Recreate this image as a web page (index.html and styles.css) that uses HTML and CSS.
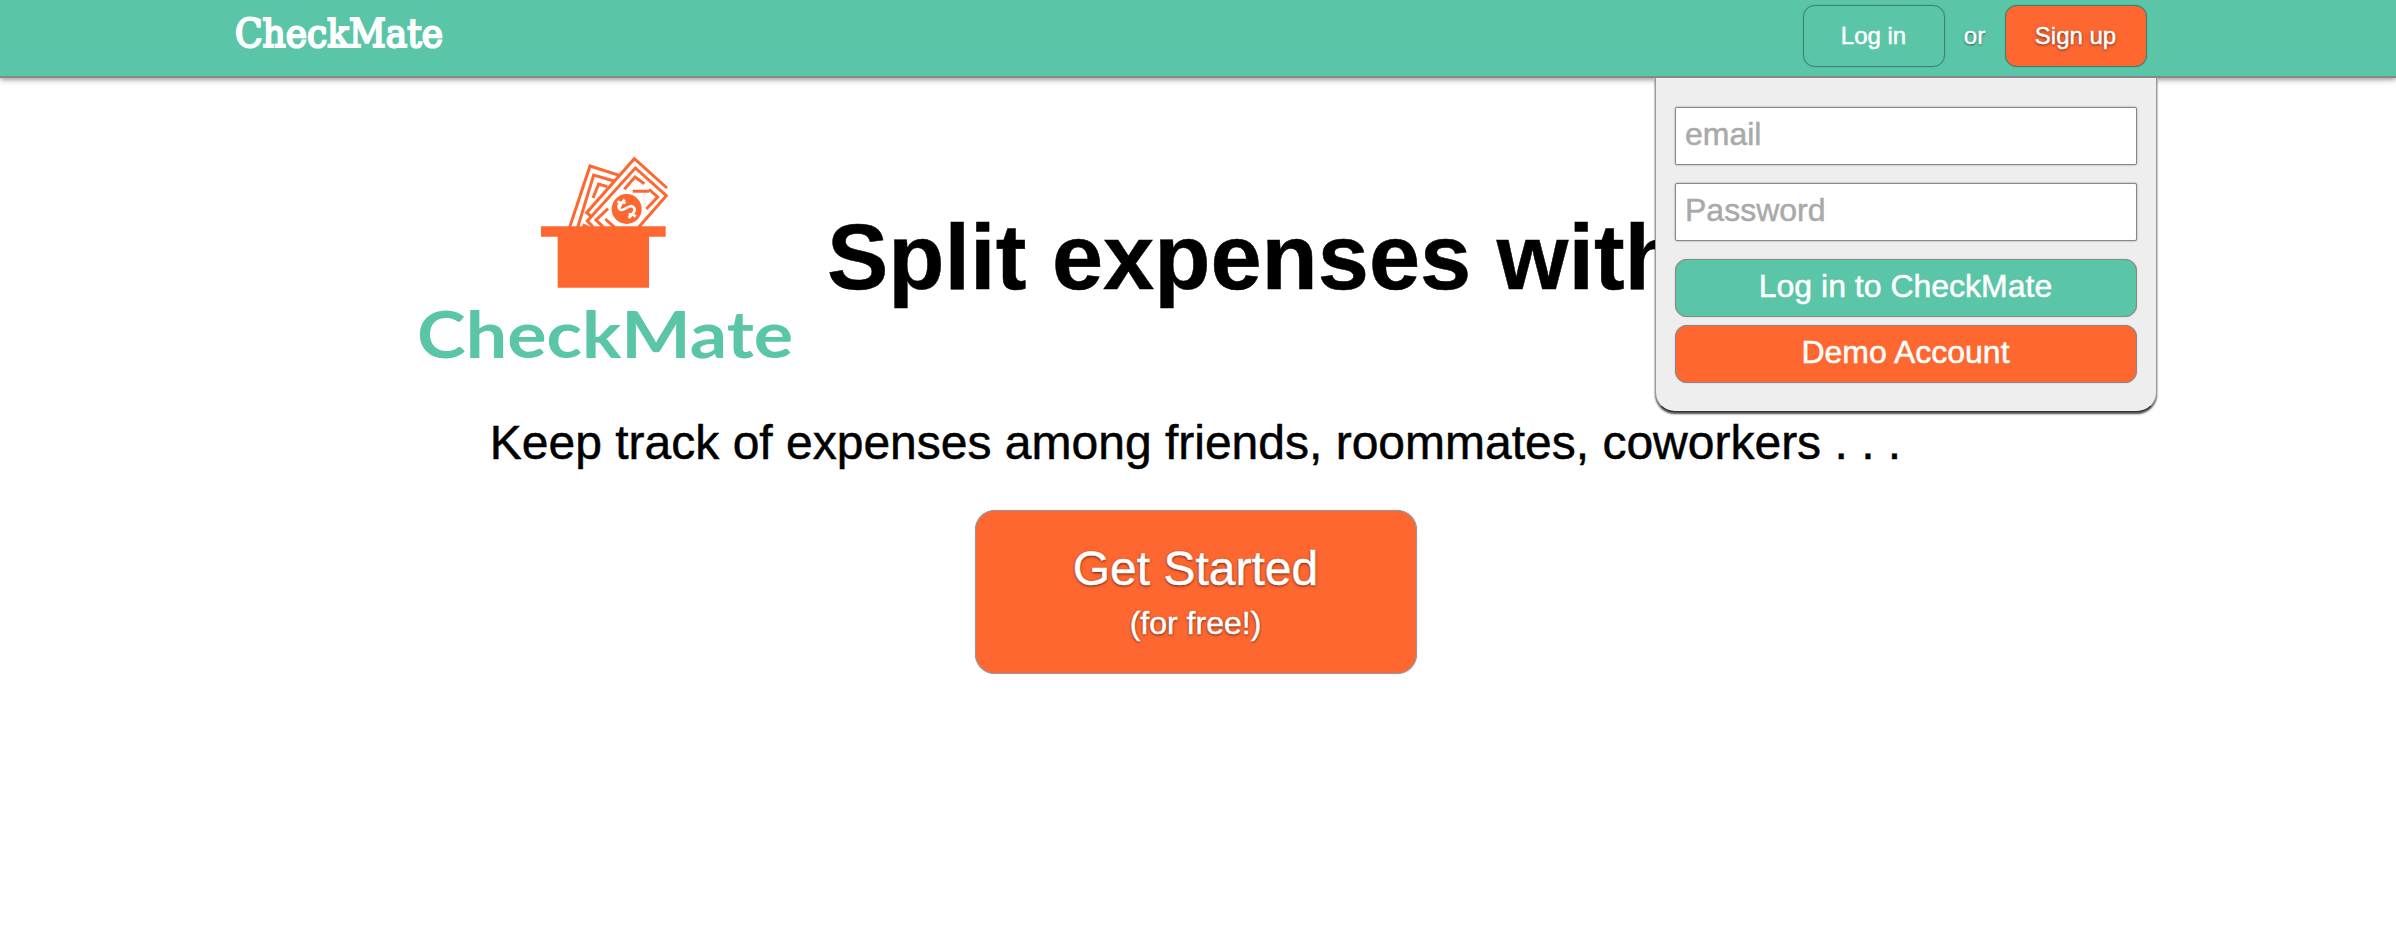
FILE: index.html
```html
<!DOCTYPE html>
<html lang="en">
<head>
<meta charset="utf-8">
<title>CheckMate</title>
<link rel="stylesheet" href="styles.css">
</head>
<body>
<header class="header">
  <a class="brand" aria-label="CheckMate">
    <svg width="212" height="76" viewBox="0 0 212 76"><text class="brand-text" x="1" y="47" textLength="208" lengthAdjust="spacingAndGlyphs">CheckMate</text></svg>
  </a>
  <nav class="nav">
    <a class="nav-button login">Log in</a>
    <span class="nav-or">or</span>
    <a class="nav-button signup">Sign up</a>
    <form class="login-panel">
      <input class="field" type="text" placeholder="email">
      <input class="field" type="password" placeholder="Password">
      <button class="panel-button green" type="button">Log in to CheckMate</button>
      <button class="panel-button orange" type="button">Demo Account</button>
    </form>
  </nav>
</header>
<main class="main">
  <section class="hero">
    <svg class="logo" width="380" height="240" viewBox="0 0 380 240">
      <g transform="translate(104 0) scale(.33333)">
        <g fill="none" stroke="#ff6730" stroke-width="9">
          <path d="M149 262L210 78L300 107"/>
          <path d="M173 262L221 105L282 123"/>
          <path d="M219 174L236 132L262 140"/>
          <path d="M441 144L343 56L200 218L212 228"/>
          <path d="M356 262L439 167L346 84L202 243L220 262"/>
          <path d="M313 148L345 111L373 131"/>
          <path d="M338 154H387M387 148L413 171L379 207"/>
          <path d="M264 206L228 240L251 262M256 237L284 262"/>
          <path d="M188 255L206 262"/>
        </g>
        <circle cx="320" cy="207" r="45" fill="#ff6730"/>
        <path d="M317 189C305 183 292 193 297 205C304 219 320 200 334 198C350 202 346 224 326 223M292 184L304 190L298 203M304 190L314 179M347 230L338 222L345 209M338 222L326 234" fill="none" stroke="#fff" stroke-width="8"/>
        <path d="M63 259H437V290H387V443H113V290H63Z" fill="#ff6730"/>
      </g>
      <text class="logo-text" x="1" y="218" textLength="376" lengthAdjust="spacingAndGlyphs">CheckMate</text>
    </svg>
    <h1 class="title">Split expenses with friends</h1>
  </section>
  <p class="subtitle">Keep track of expenses among friends, roommates, coworkers . . .</p>
  <a class="cta"><span class="cta-main">Get Started</span><span class="cta-sub">(for free!)</span></a>
</main>
</body>
</html>
```
FILE: styles.css
```css
* { box-sizing: border-box; }
body {
  margin: 0;
  background: #fff;
  color: #000;
  font-family: "Liberation Sans", Arial, sans-serif;
  -webkit-text-stroke: .5px;
}
.header {
  position: relative;
  z-index: 1;
  display: flex;
  justify-content: space-between;
  height: 78px;
  padding: 0 249px 0 234px;
  background: #5ac5a7;
  border-bottom: 2px solid #888;
  box-shadow: 0 1px 6px rgba(0, 0, 0, .5);
}
.brand { height: 76px; }
.brand svg { display: block; overflow: visible; }
.brand-text {
  fill: #fff;
  stroke: #fff;
  -webkit-text-stroke: 0;
  stroke-width: 2.2px;
  font: 39px "DejaVu Serif", serif;
}
.nav {
  position: relative;
  display: flex;
  align-items: center;
  height: 62px;
  margin-top: 5px;
  color: #fff;
  font-size: 24px;
}
.nav-button {
  width: 142px;
  height: 62px;
  border: 1px solid #3a8370;
  border-radius: 12px;
  line-height: 60px;
  text-align: center;
  box-shadow: 0 0 1px #3a8370;
}
.nav-or { width: 60px; padding-right: 1px; text-align: center; text-shadow: 0 1px 2px rgba(0, 0, 0, .7); }
.login { padding-right: 1px; }
.signup { padding-right: 1px; background: #ff6730; text-shadow: 0 1px 3px rgba(0, 0, 0, .7); }
.login-panel {
  position: absolute;
  top: 73px;
  right: -10px;
  display: flex;
  flex-direction: column;
  width: 502px;
  height: 334px;
  padding: 29px 19px 0;
  background: #eee;
  border: 1px solid #999;
  border-top: 0;
  border-bottom-color: #333;
  border-radius: 0 0 20px 20px;
  box-shadow: 0 2px 2px rgba(0, 0, 0, .7);
}
.field {
  flex: none;
  height: 58px;
  margin: 0 0 18px;
  padding: 0 9px 3px;
  background: #fff;
  border: 1px solid #888;
  border-radius: 2px;
  box-shadow: 0 0 2px rgba(0, 0, 0, .4);
  font: 32px "Liberation Sans", Arial, sans-serif;
  -webkit-text-stroke: .5px;
}
.field::placeholder { color: #a9a9a9; }
.panel-button {
  flex: none;
  height: 58px;
  margin: 0 0 8px;
  padding: 0 1px 3px 0;
  border: 1px solid #888;
  border-radius: 12px;
  box-shadow: 0 0 1px #888;
  color: #fff;
  font: 32px "Liberation Sans", Arial, sans-serif;
  -webkit-text-stroke: .5px;
}
.green { background: #5ac5a7; }
.orange { background: #ff6730; }
.main {
  display: flex;
  flex-direction: column;
  align-items: center;
  padding-right: 5px;
}
.hero {
  display: flex;
  align-self: flex-start;
  margin: 62px 0 0 416px;
}
.logo { flex: none; overflow: visible; }
.logo-text {
  fill: #5ac5a7;
  -webkit-text-stroke: 0;
  font: bold 65px Lato, sans-serif;
}
.title {
  margin: 64px 0 0 31px;
  font-size: 92px;
  line-height: 106px;
  white-space: nowrap;
}
.subtitle {
  margin: 35px 0 0;
  font-size: 48px;
  line-height: 56px;
  white-space: nowrap;
}
.cta {
  display: flex;
  flex-direction: column;
  align-items: center;
  width: 442px;
  height: 164px;
  margin-top: 39px;
  padding-top: 30px;
  background: #ff6730;
  border: 1px solid #999;
  border-radius: 20px;
  box-shadow: 0 0 1px #88a;
  color: #fff;
  text-shadow: 0 1px 3px rgba(0, 0, 0, .7);
}
.cta-main { font-size: 48px; line-height: 56px; }
.cta-sub { font-size: 32px; line-height: 52px; }
```
